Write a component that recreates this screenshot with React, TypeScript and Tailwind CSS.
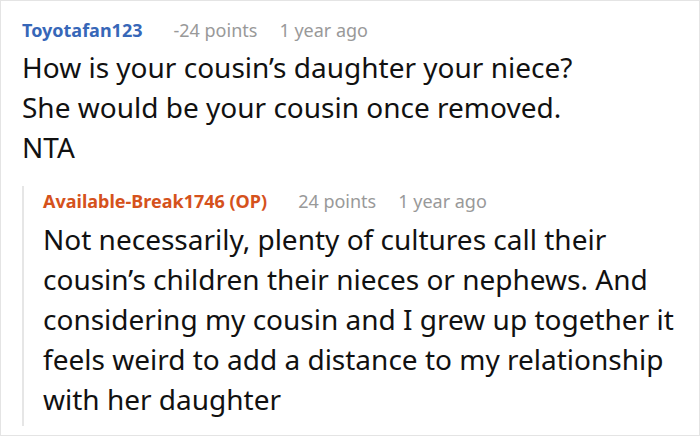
const font = { fontFamily: '"Noto Sans", "Open Sans", sans-serif' };

function Meta({ name, color, points, time }: { name: string; color: string; points: string; time: string }) {
  return (
    <div className="flex items-baseline h-[30px] text-[18px] leading-[30px]">
      <span className={`font-bold ${color}`}>{name}</span>
      <span className="ml-[31px] text-[#999999]">{points}</span>
      <span className="ml-[22px] text-[#999999]">{time}</span>
    </div>
  );
}

export default function App() {
  return (
    <div className="w-[700px] h-[436px] bg-white border border-[#e4e4e4] overflow-hidden" style={font}>
      <div className="pl-[21px] pt-[14px]">
        <Meta name="Toyotafan123" color="text-[#3767b8]" points="-24 points" time="1 year ago" />
        <div className="text-[28px] leading-[40px] text-[#111111] mt-[2px]">
          <p>How is your cousin’s daughter your niece?</p>
          <p>She would be your cousin once removed.</p>
          <p>NTA</p>
        </div>
      </div>
      <div className="ml-[21px] mt-[33px] border-l-2 border-[#e6e6e6] pl-[19px] pb-[7px]">
        <div className="-mt-[14px]">
          <Meta name="Available-Break1746 (OP)" color="text-[#d5521c]" points="24 points" time="1 year ago" />
        </div>
        <div className="text-[28px] leading-[40px] text-[#111111] mt-[3px]">
          Not necessarily, plenty of cultures call their cousin’s children their nieces or nephews. And considering my cousin and I grew up together it feels weird to add a distance to my relationship with her daughter
        </div>
      </div>
    </div>
  );
}
